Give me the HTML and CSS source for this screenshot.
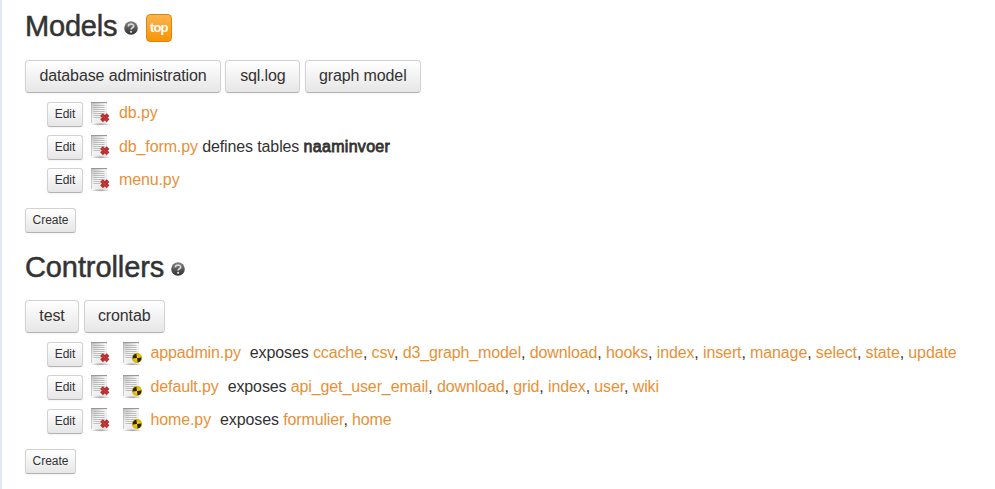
FILE: index.html
```html
<!DOCTYPE html>
<html lang="en">
<head>
<meta charset="utf-8">
<title>Models and Controllers</title>
<link rel="stylesheet" href="styles.css">
</head>
<body>
<svg class="defs" width="0" height="0">
  <defs>
    <linearGradient id="paper" x1="0" y1="0" x2="1" y2="1"><stop offset="0" stop-color="#bdbdbd"/><stop offset=".45" stop-color="#f5f5f5"/><stop offset="1" stop-color="#e2e2e2"/></linearGradient>
    <linearGradient id="orb" x1="0" y1="0" x2="0" y2="1"><stop offset="0" stop-color="#828282"/><stop offset="1" stop-color="#303030"/></linearGradient>
    <radialGradient id="shade"><stop offset="0" stop-color="#777" stop-opacity=".75"/><stop offset="1" stop-color="#777" stop-opacity="0"/></radialGradient>
    <radialGradient id="gold"><stop offset="0" stop-color="#ffdf20"/><stop offset="1" stop-color="#d3ac00"/></radialGradient>
    <symbol id="page" viewBox="0 0 20 24">
      <ellipse cx="9.5" cy="22.2" rx="10" ry="1.5" fill="url(#shade)"/>
      <path d="M0 1h16v20H0z" fill="url(#paper)"/>
      <path d="M0 .6h16" stroke="#8d8d8d" stroke-width="1"/>
      <path d="M.4 1v20" stroke="#b5b5b5" stroke-width=".7"/>
      <path d="M2.5 3.5h11M2.5 5.5h11M2.5 7.5h11M2.5 9.5h11M2.5 11.5h11M2.5 13.5h8M2.5 15.5h7" stroke="#b0b0b0" stroke-width=".8"/>
    </symbol>
    <symbol id="delete" viewBox="0 0 20 24">
      <use href="#page"/>
      <path d="M10.5 12.6l6.6 6.2M17.1 12.6l-6.6 6.2" stroke="#b93030" stroke-width="4"/>
      <path d="M10.5 12.8l6.5 6" stroke="#c94444" stroke-width="1"/>
    </symbol>
    <symbol id="test" viewBox="0 0 20 24">
      <use href="#page"/>
      <circle cx="14" cy="16" r="5" fill="url(#gold)"/>
      <path d="M14 16v-4.4a4.4 4.4 0 0 0-4.4 4.4zM14 16h4.4a4.4 4.4 0 0 1-4.4 4.4z" transform="rotate(-8 14 16)" fill="#292408"/>
    </symbol>
    <symbol id="help" viewBox="0 0 14 14">
      <circle cx="7" cy="7" r="6.8" fill="url(#orb)"/>
      <path d="M4.4 5.4c0-3 5.3-2.9 5.3-.2 0 1.5-2.6 1.7-2.6 3.2" fill="none" stroke="#d8d8d8" stroke-width="1.7"/>
      <circle cx="7.1" cy="10.8" r="1.1" fill="#d8d8d8"/>
    </symbol>
  </defs>
</svg>
<section>
  <h2><span>Models</span><svg class="help"><use href="#help"/></svg><a class="top"><span>top</span></a></h2>
  <div class="actions"><a class="btn w1">database administration</a><a class="btn w2">sql.log</a><a class="btn w3">graph model</a></div>
  <ul>
    <li><a class="btn small">Edit</a><svg class="file"><use href="#delete"/></svg><p><a>db.py</a></p></li>
    <li><a class="btn small">Edit</a><svg class="file"><use href="#delete"/></svg><p><a>db_form.py</a> defines tables <b>naaminvoer</b></p></li>
    <li><a class="btn small">Edit</a><svg class="file"><use href="#delete"/></svg><p><a>menu.py</a></p></li>
  </ul>
  <a class="btn small create">Create</a>
</section>
<section class="controllers">
  <h2><span>Controllers</span><svg class="help"><use href="#help"/></svg></h2>
  <div class="actions"><a class="btn w4">test</a><a class="btn w5">crontab</a></div>
  <ul>
    <li><a class="btn small">Edit</a><svg class="file"><use href="#delete"/></svg><svg class="file second"><use href="#test"/></svg><p><a>appadmin.py</a><span class="exposes">exposes <a>ccache</a>, <a>csv</a>, <a>d3_graph_model</a>, <a>download</a>, <a>hooks</a>, <a>index</a>, <a>insert</a>, <a>manage</a>, <a>select</a>, <a>state</a>, <a>update</a></span></p></li>
    <li><a class="btn small">Edit</a><svg class="file"><use href="#delete"/></svg><svg class="file second"><use href="#test"/></svg><p><a>default.py</a><span class="exposes">exposes <a>api_get_user_email</a>, <a>download</a>, <a>grid</a>, <a>index</a>, <a>user</a>, <a>wiki</a></span></p></li>
    <li><a class="btn small">Edit</a><svg class="file"><use href="#delete"/></svg><svg class="file second"><use href="#test"/></svg><p><a>home.py</a><span class="exposes">exposes <a>formulier</a>, <a>home</a></span></p></li>
  </ul>
  <a class="btn small create">Create</a>
</section>
</body>
</html>
```
FILE: styles.css
```css
* { box-sizing: border-box; }
body {
  margin: 0;
  height: 489px;
  overflow: hidden;
  padding-left: 23px;
  border-left: 2px solid #dfe9f5;
  background: #fff;
  color: #333;
  font: 16px/20px "Liberation Sans", Arial, sans-serif;
  letter-spacing: -.12px;
}
.defs { position: absolute; }
section { height: 240px; }
h2 {
  display: flex;
  align-items: center;
  height: 60px;
  margin: 0;
  padding-bottom: 8px;
  font-size: 29px;
  font-weight: 400;
  letter-spacing: -.2px;
  -webkit-text-stroke: .5px #333;
}
.controllers h2 { padding-bottom: 6px; letter-spacing: -.1px; }
.help { width: 14px; height: 14px; margin: 4px 0 0 7px; -webkit-text-stroke: 0; }
.top {
  display: flex;
  justify-content: center;
  width: 26px;
  height: 28px;
  margin: 4px 0 0 8px;
  border: 1px solid #df8505;
  border-radius: 4px;
  background: linear-gradient(#fbb450, #f89406);
  color: #fff;
  font-size: 13px;
  font-weight: 700;
  line-height: 25px;
  letter-spacing: -.9px;
  -webkit-text-stroke: 0;
}
h2 span + .help { margin-left: 6.5px; }
.actions { display: flex; gap: 4.4px; height: 33px; }
.btn {
  display: flex;
  justify-content: center;
  height: 33px;
  border: 1px solid #d2d2d2;
  border-bottom-color: #b3b3b3;
  border-radius: 4px;
  background: linear-gradient(#fff, #e6e6e6);
  box-shadow: inset 0 1px #fff, 0 1px 2px rgba(0,0,0,.05);
  color: #333;
  line-height: 30px;
}
.w1 { width: 196px; }
.w2 { width: 75px; }
.w3 { width: 116px; }
.w4 { width: 54px; }
.w4 + .btn { margin-left: .3px; }
.w5 { width: 81px; }
ul { list-style: none; margin: 4px 0 11px; padding: 0 0 0 22px; }
.controllers ul { margin-bottom: 12px; }
li { display: flex; align-items: center; height: 33.33px; }
li:nth-child(2) p { margin-bottom: 0; }
.controllers li:nth-child(n+2) .small { margin-top: 2px; }
.controllers li:nth-child(2) .file { margin-top: 1px; }
.small {
  width: 36px;
  height: 25px;
  margin-top: 1px;
  border-radius: 3px;
  font-size: 12px;
  line-height: 22px;
  letter-spacing: 0;
}
.create { width: 51px; margin-top: 0; }
.file { width: 20px; height: 24px; margin: 0 8px; }
.second { margin-left: 4px; }
p { margin: 0 0 1px; white-space: nowrap; }
.second + p { margin-left: -.5px; }
p a { color: #e69138; }
p b { font-weight: 400; letter-spacing: .3px; -webkit-text-stroke: .8px #333; }
.exposes { margin-left: 9px; }
```
